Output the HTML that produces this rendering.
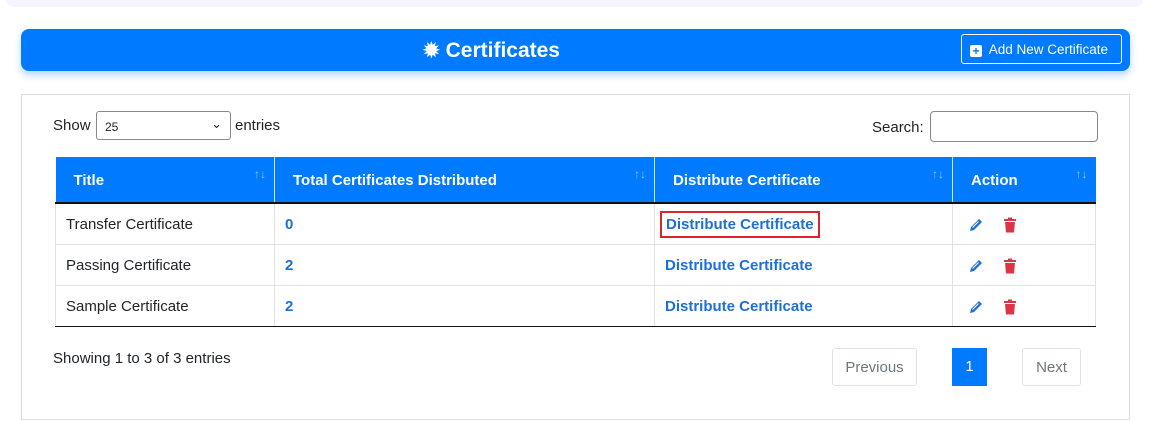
<!DOCTYPE html>
<html><head><meta charset="utf-8"><style>
*{box-sizing:border-box;margin:0;padding:0}
body{width:1149px;height:421px;background:#fff;font-family:"Liberation Sans",sans-serif;color:#212529;position:relative;overflow:hidden;font-size:15px}
.a{position:absolute}
.top{left:6px;top:-10px;width:1137px;height:17px;background:#f4f5fd;border-radius:8px}
.hdr{left:21px;top:29px;width:1109px;height:42px;background:#007bff;border-radius:8px;box-shadow:0 4px 8px rgba(0,123,255,.3)}
.card{left:21px;top:94px;width:1109px;height:326px;border:1px solid #ddd}
table{position:absolute;left:55px;top:157px;width:1041px;border-collapse:collapse}
th{background:#007bff;color:#fff;font-weight:bold;text-align:left;height:46px;padding:2px 0 0 18px;border-left:1px solid #cfe5ff;border-bottom:2px solid #111;position:relative}
th:first-child{border-left:none}
th span{position:absolute;right:8px;top:10px;font-size:12px;color:#8cc1ff;font-weight:normal}
td{height:41px;padding:2px 0 0 10px;border:1px solid #dee2e6;border-top:none}
tr:last-child td{border-bottom:1px solid #111}
.l{color:#1e6fd9;font-weight:bold}
.btn{border:1px solid #dee2e6;border-radius:3px;color:#6c757d;text-align:center;line-height:38px;height:38px}
svg{vertical-align:middle}
</style></head><body>
<div class="a top"></div>
<div class="a hdr">
 <div class="a" style="left:402px;top:9px;color:#fff;font-size:21px;font-weight:bold"><span style="font-size:20px">✹</span> Certificates</div>
 <div class="a" style="left:940px;top:5px;width:161px;height:30px;border:1px solid #fff;border-radius:3px;color:#fff;font-size:13.5px;line-height:29px;padding-left:8px"><span style="display:inline-block;width:12px;height:12px;background:#fff;color:#007bff;border-radius:2px;font-size:12px;line-height:12px;text-align:center;font-weight:bold;vertical-align:-1px">+</span>&nbsp; Add New Certificate</div>
</div>
<div class="a card"></div>
<div class="a" style="left:53px;top:117px">Show</div>
<div class="a" style="left:96px;top:111px;width:135px;height:29px;border:1px solid #888;border-radius:3px;font-size:12px;padding:8px 0 0 8px">25<span style="position:absolute;right:8px;top:4px;font-size:13px">⌄</span></div>
<div class="a" style="left:235px;top:117px">entries</div>
<div class="a" style="left:872px;top:119px">Search:</div>
<div class="a" style="left:930px;top:111px;width:168px;height:31px;border:1px solid #888;border-radius:4px"></div>
<table>
<tr><th style="width:219px">Title<span>↑↓</span></th><th style="width:380px">Total Certificates Distributed<span>↑↓</span></th><th style="width:298px">Distribute Certificate<span>↑↓</span></th><th>Action<span>↑↓</span></th></tr>
<tr><td>Transfer Certificate</td><td class="l">0</td><td class="l"><span style="outline:2px solid #d9262c;outline-offset:3px;padding:0 1px">Distribute Certificate</span></td><td class="ic"></td></tr>
<tr><td>Passing Certificate</td><td class="l">2</td><td class="l">Distribute Certificate</td><td class="ic"></td></tr>
<tr><td>Sample Certificate</td><td class="l">2</td><td class="l">Distribute Certificate</td><td class="ic"></td></tr>
</table>
<script>
document.querySelectorAll('.ic').forEach(function(t){t.innerHTML='<svg width="14" height="14" viewBox="0 0 14 14" style="margin-left:6px"><path d="M10 1l3 3-8 8-4 1 1-4z" fill="#1e6fd9"/><path d="M3.5 9.5l6-6" stroke="#fff" stroke-width="1"/></svg><svg width="14" height="16" viewBox="0 0 14 16" style="margin-left:20px"><rect x="1" y="2" width="12" height="2" fill="#dc3545"/><rect x="5" y="0.5" width="4" height="2" fill="#dc3545"/><path d="M2 5h10l-1 10.5H3z" fill="#dc3545"/></svg>'});
</script>
<div class="a" style="left:53px;top:350px">Showing 1 to 3 of 3 entries</div>
<div class="a btn" style="left:832px;top:348px;width:85px">Previous</div>
<div class="a" style="left:952px;top:348px;width:35px;height:38px;background:#007bff;color:#fff;text-align:center;line-height:38px">1</div>
<div class="a btn" style="left:1022px;top:348px;width:59px">Next</div>
</body></html>
